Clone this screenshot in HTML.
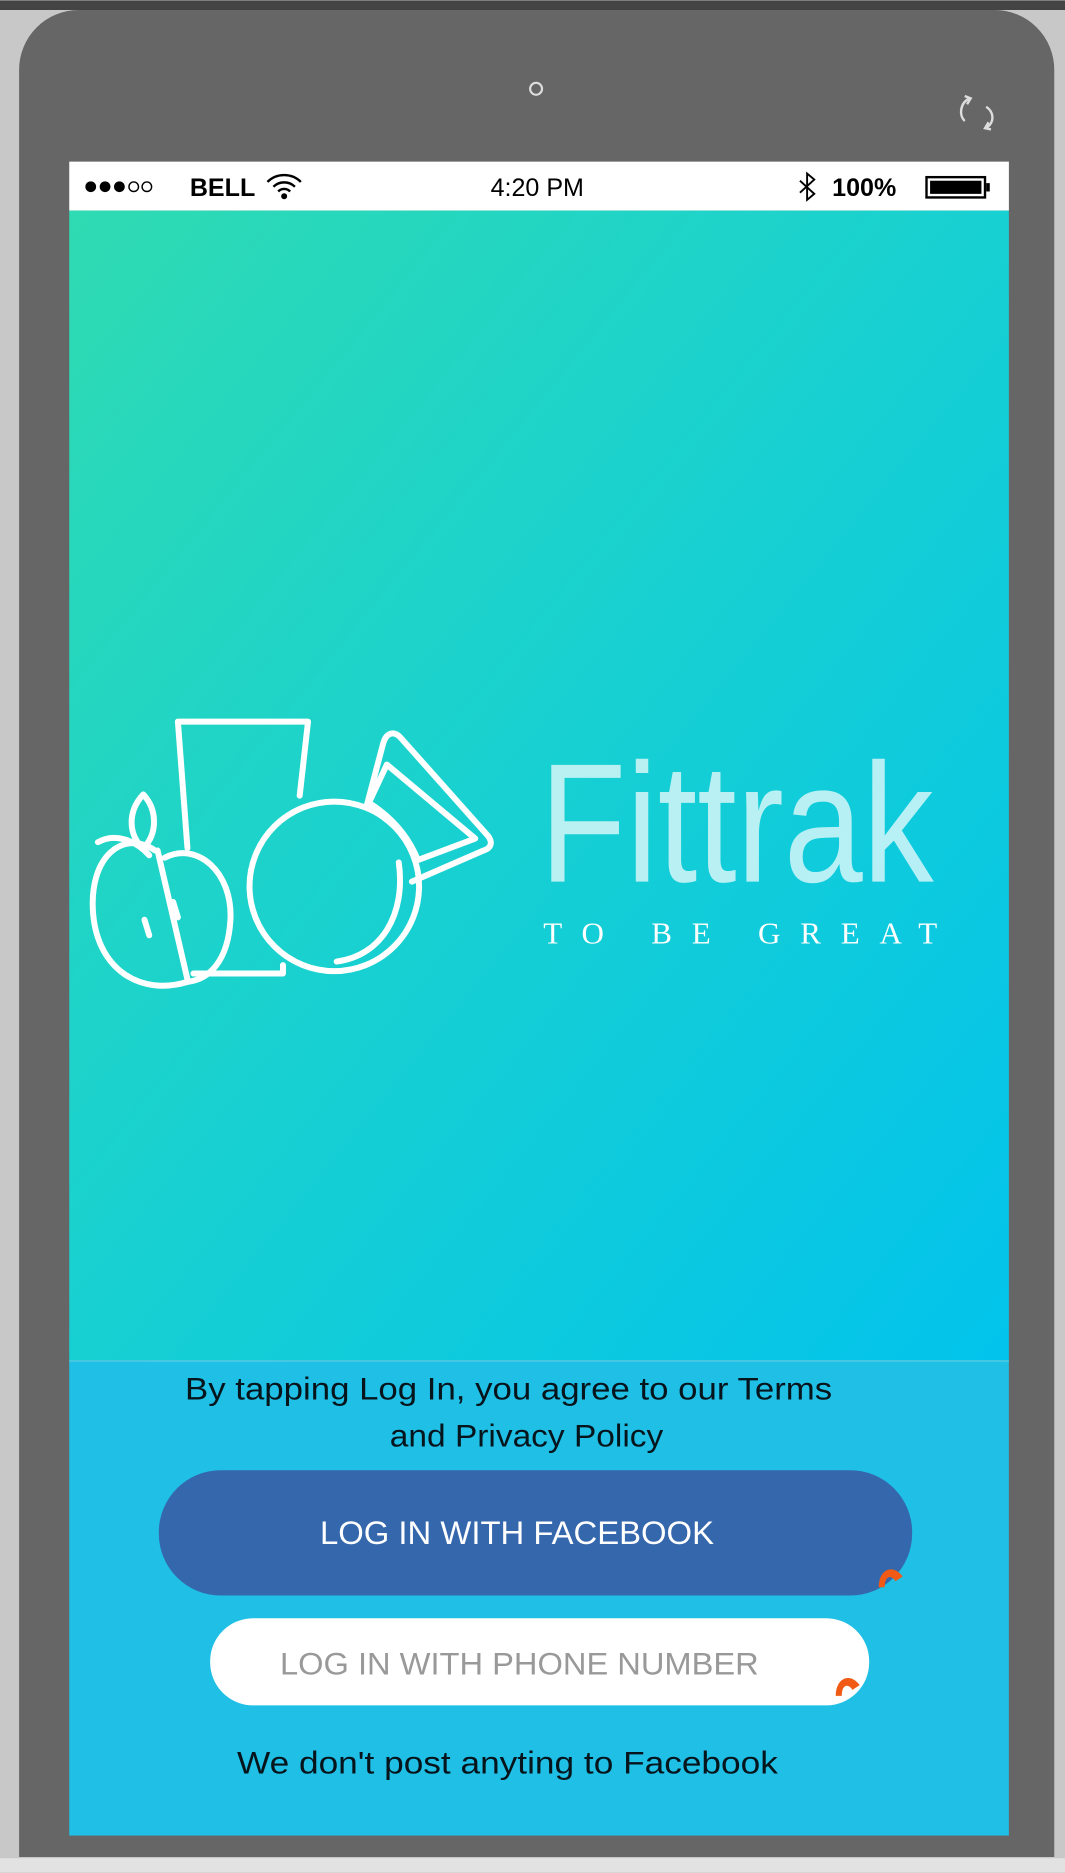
<!DOCTYPE html>
<html><head><meta charset="utf-8"><style>html,body{margin:0;padding:0;background:#c8c8c8}svg{display:block}</style></head><body>
<svg width="1065" height="1873" viewBox="0 0 892 1568" xmlns="http://www.w3.org/2000/svg" font-family="Liberation Sans, sans-serif">
<defs>
<linearGradient id="g" x1="0" y1="0" x2="1" y2="1">
<stop offset="0" stop-color="#2fdbb2"/><stop offset="0.5" stop-color="#17d0d2"/><stop offset="1" stop-color="#02c3ec"/>
</linearGradient>
</defs>
<rect width="892" height="1568" fill="#c8c8c8"/>
<rect width="892" height="8" fill="#444"/>
<rect x="0" y="1556" width="892" height="12" fill="#e2e2e2"/>
<path d="M66,8 H833 A50,50 0 0 1 883,58 V1555 H16 V58 A50,50 0 0 1 66,8 Z" fill="#666"/>
<circle cx="449" cy="74" r="5" fill="none" stroke="#ddd" stroke-width="1.8"/>
<g fill="none" stroke="#ddd" stroke-width="2">
<path d="M812,82 C804,86 803,96 808,101"/><path d="M808,80 L813,82 L810,87"/>
<path d="M826,89 C833,94 833,102 826,107"/><path d="M830,108 L825,107 L828,102"/>
</g>
<rect x="58" y="135" width="787" height="41" fill="#fff"/>
<rect x="58" y="176" width="787" height="963" fill="url(#g)"/>
<rect x="58" y="1139" width="787" height="398" fill="#20bfe6"/>
<line x1="58" y1="1139.5" x2="845" y2="1139.5" stroke="#5fd3ea" stroke-width="1"/>
<g fill="#000">
<circle cx="76" cy="156" r="4.5"/><circle cx="88" cy="156" r="4.5"/><circle cx="100" cy="156" r="4.5"/>
<circle cx="112" cy="156" r="4" fill="none" stroke="#000" stroke-width="1.2"/><circle cx="123" cy="156" r="4" fill="none" stroke="#000" stroke-width="1.2"/>
<text x="159" y="164" font-size="21" font-weight="bold">BELL</text>
<text x="450" y="164" font-size="21" text-anchor="middle">4:20 PM</text>
<text x="697" y="164" font-size="21" font-weight="bold">100%</text>
</g>
<g fill="none" stroke="#000" stroke-width="2">
<path d="M224,152 A20,20 0 0 1 252,152"/><path d="M229,156 A13,13 0 0 1 247,156"/><path d="M233,160 A7,7 0 0 1 243,160"/>
</g>
<circle cx="238" cy="164" r="2.5" fill="#000"/>
<path d="M670,151 L682,162 L676,167 V145 L682,150 L670,161" fill="none" stroke="#000" stroke-width="1.6"/>
<rect x="776" y="148" width="49" height="17" fill="none" stroke="#000" stroke-width="2"/>
<rect x="779" y="151" width="43" height="11" fill="#000"/>
<rect x="826" y="153" width="3" height="7" fill="#000"/>
<g fill="none" stroke="#fff" stroke-width="5" stroke-linecap="round" stroke-linejoin="round">
<path d="M157,710 L149,604 H258 L251,666"/>
<path d="M162,815 H237 V808"/>
<circle cx="280" cy="742" r="71"/>
<path d="M334,722 C340,765 320,800 282,805"/>
<path d="M307,675 L321,622 C324,612 331,612 336,618 L409,700 C413,706 411,710 405,712 L345,738"/>
<path d="M324,640 L398,702 L350,720 C342,700 328,684 309,672 Z"/>
<path d="M130,712 C104,694 74,716 78,765 C82,812 118,834 157,822"/>
<path d="M132,712 L157,820"/>
<path d="M138,718 C165,704 195,730 193,770 C191,805 175,820 157,822"/>
<path d="M82,705 C96,697 113,703 125,716"/>
<path d="M120,665 C106,680 108,700 120,710 C132,698 132,678 120,665 Z"/>
<path d="M121,770 L125,783"/><path d="M145,755 L149,768"/>
</g>
<text x="452" y="738" font-size="142" fill="#fff" fill-opacity="0.7" textLength="330" lengthAdjust="spacingAndGlyphs">Fittrak</text>
<text x="455" y="790" font-size="26" fill="#fff" font-family="Liberation Serif, serif" textLength="330" lengthAdjust="spacing">TO BE GREAT</text>
<g font-size="26" fill="#06141c" text-anchor="middle">
<text x="426" y="1172" textLength="542" lengthAdjust="spacingAndGlyphs">By tapping Log In, you agree to our Terms</text>
<text x="441" y="1211" textLength="229" lengthAdjust="spacingAndGlyphs">and Privacy Policy</text>
<text x="425" y="1485" textLength="453" lengthAdjust="spacingAndGlyphs">We don't post anyting to Facebook</text>
</g>
<rect x="133" y="1231" width="631" height="105" rx="52" fill="#3567ad"/>
<text x="433" y="1293" font-size="27" fill="#fff" text-anchor="middle" textLength="330" lengthAdjust="spacingAndGlyphs">LOG IN  WITH FACEBOOK</text>
<rect x="176" y="1355" width="552" height="73" rx="36" fill="#fff"/>
<text x="435" y="1402" font-size="26" fill="#999" text-anchor="middle" textLength="401" lengthAdjust="spacingAndGlyphs">LOG IN WITH PHONE NUMBER</text>
<path d="M736,1329 C736,1314 748,1309 756,1320 L750,1324 C746,1318 741,1320 741,1329 Z" fill="#f05a14"/>
<path d="M700,1420 C700,1405 712,1400 720,1411 L714,1415 C710,1409 705,1411 705,1420 Z" fill="#f05a14"/>
</svg>
</body></html>
